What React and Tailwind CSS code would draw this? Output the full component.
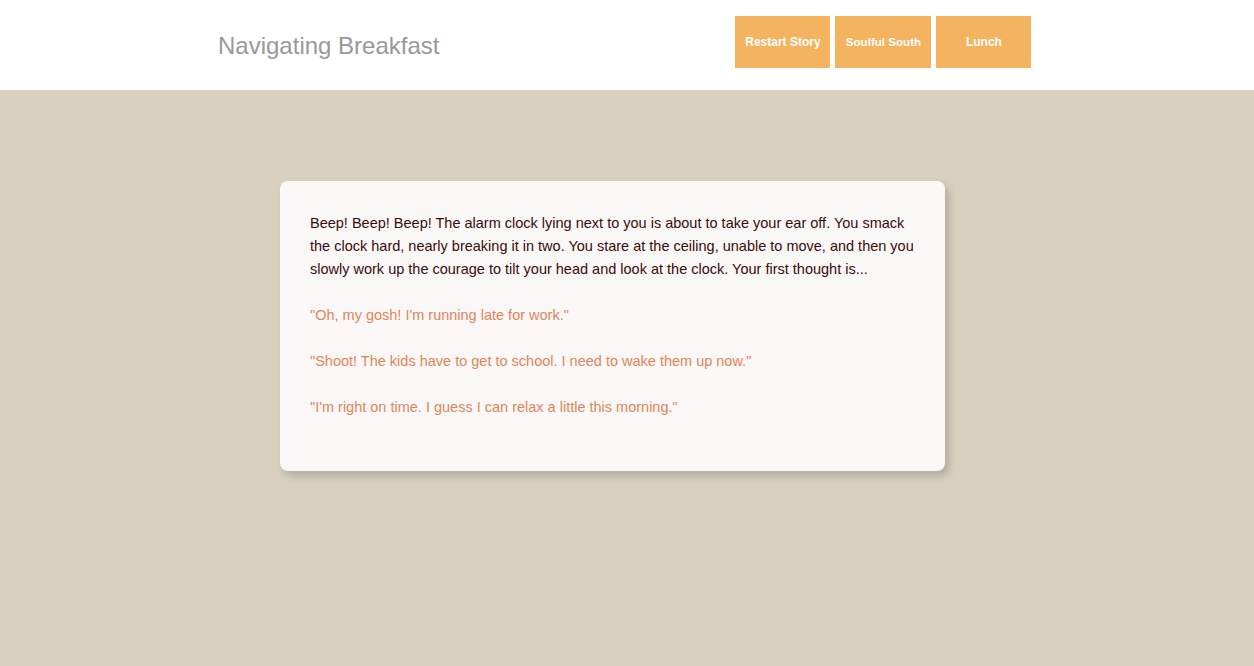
export default function App() {
  const options = [
    '"Oh, my gosh! I\'m running late for work."',
    '"Shoot! The kids have to get to school. I need to wake them up now."',
    '"I\'m right on time. I guess I can relax a little this morning."',
  ]
  return (
    <div className="min-h-[666px] bg-[#d9d1be] font-['Liberation_Sans',Arial,sans-serif]">
      <header className="h-[90px] bg-white flex items-start">
        <h1 className="ml-[218px] mt-[32px] text-[24px] leading-[28px] text-[#999999]">Navigating Breakfast</h1>
        <nav className="ml-[296px] mt-[16px] flex gap-[5px]">
          <button className="w-[95px] h-[52px] bg-[#f4b35e] text-white text-[12px] font-bold">Restart Story</button>
          <button className="w-[96px] h-[52px] bg-[#f4b35e] text-white text-[11.6px] font-bold">Soulful South</button>
          <button className="w-[95px] h-[52px] bg-[#f4b35e] text-white text-[12px] font-bold">Lunch</button>
        </nav>
      </header>
      <main className="pt-[91px] pl-[280px]">
        <div className="w-[665px] rounded-[8px] bg-[#faf8f6] px-[30px] pt-[31px] pb-[29px] shadow-[4px_5px_8px_rgba(0,0,0,0.18)]">
          <p className="text-[14.5px] leading-[23px] text-[#3a0b0b] mb-[23px]">
            Beep! Beep! Beep! The alarm clock lying next to you is about to take your ear off. You smack the clock hard, nearly breaking it in two. You stare at the ceiling, unable to move, and then you slowly work up the courage to tilt your head and look at the clock. Your first thought is...
          </p>
          {options.map((o) => (
            <p key={o} className="text-[14.5px] leading-[23px] text-[#e0855a] mb-[23px] cursor-pointer">{o}</p>
          ))}
        </div>
      </main>
    </div>
  )
}
